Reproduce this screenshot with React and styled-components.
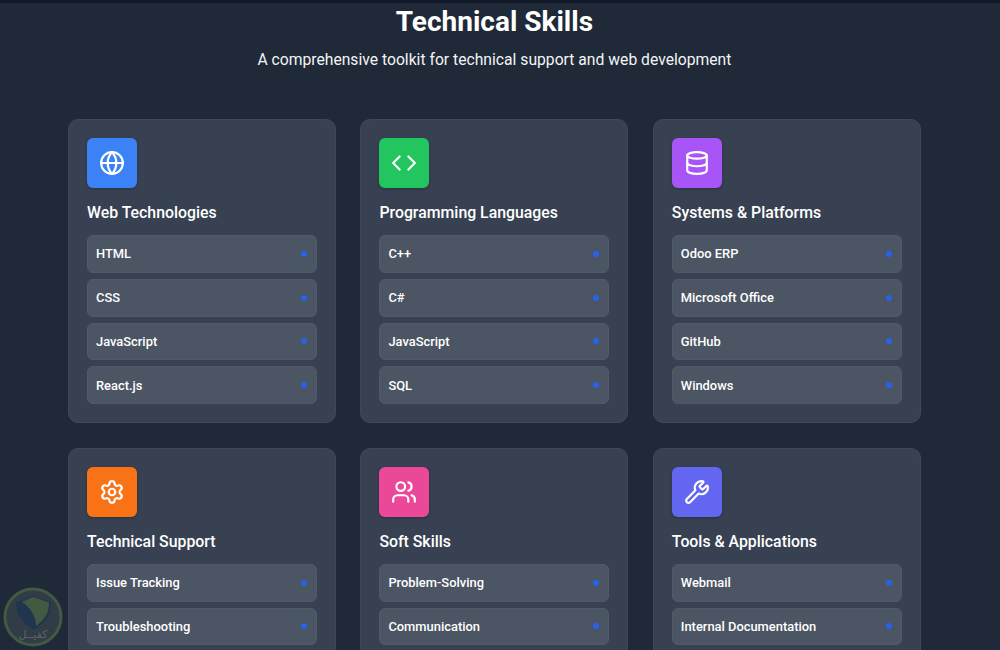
import React from "react";
import styled, { createGlobalStyle } from "styled-components";
import { Globe, Code, Database, Settings, Users, Wrench } from "lucide-react";

const GlobalStyle = createGlobalStyle`
  html, body {
    margin: 0;
    padding: 0;
    height: 100%;
    overflow: hidden;
    background: #1f2937;
  }
  * {
    box-sizing: border-box;
  }
`;

const Page = styled.div`
  height: 650px;
  overflow: hidden;
  position: relative;
  background: #1f2937;
  border-top: 3px solid #111827;
  padding: 1px 79.2px 0 68px;
  font-family: Roboto, "Noto Sans", sans-serif;
  color: #fff;
`;

const Title = styled.h2`
  margin: 0;
  font-size: 28px;
  line-height: 36px;
  font-weight: 700;
  text-align: center;
`;

const Subtitle = styled.p`
  margin: 8px 0 0;
  font-size: 15.7px;
  line-height: 24px;
  text-align: center;
  color: #f3f4f6;
`;

const Grid = styled.div`
  display: grid;
  grid-template-columns: repeat(3, 1fr);
  gap: 25px 24.4px;
  margin-top: 47px;
`;

const Card = styled.section`
  background: #374151;
  border: 1px solid #3e4858;
  border-radius: 10px;
  padding: 18px 18px 17.75px;
`;

const IconBox = styled.div`
  width: 50px;
  height: 50px;
  border-radius: 6px;
  display: flex;
  align-items: center;
  justify-content: center;
  background: ${(p) => p.$color};
  box-shadow: 0 1px 3px rgba(0, 0, 0, 0.25);
  color: #fff;
`;

const CardTitle = styled.h3`
  margin: 14px 0 11px;
  font-size: 15.85px;
  line-height: 22px;
  font-weight: 500;
`;

const List = styled.ul`
  list-style: none;
  margin: 0;
  padding: 0;
  display: flex;
  flex-direction: column;
  gap: 6px;
`;

const Item = styled.li`
  height: 37.75px;
  padding: 0 9px 0 8px;
  display: flex;
  align-items: center;
  justify-content: space-between;
  background: #4b5563;
  border: 1px solid #505a68;
  border-radius: 6px;
  font-size: 12.9px;
  font-weight: 500;
`;

const Dot = styled.span`
  width: 6px;
  height: 6px;
  border-radius: 50%;
  background: #2563eb;
`;

const Badge = styled.div`
  position: absolute;
  left: 3px;
  top: 584px;
  width: 60px;
  height: 60px;
  opacity: 0.6;
`;

const BadgeText = styled.span`
  position: absolute;
  left: 0;
  right: 0;
  top: 42px;
  text-align: center;
  font-family: "DejaVu Sans", sans-serif;
  font-size: 11px;
  line-height: 12px;
  color: #7f8a80;
`;

const skills = [
  { title: "Web Technologies", color: "#3b82f6", icon: Globe, items: ["HTML", "CSS", "JavaScript", "React.js"] },
  { title: "Programming Languages", color: "#22c55e", icon: Code, items: ["C++", "C#", "JavaScript", "SQL"] },
  { title: "Systems & Platforms", color: "#a855f7", icon: Database, items: ["Odoo ERP", "Microsoft Office", "GitHub", "Windows"] },
  { title: "Technical Support", color: "#f97316", icon: Settings, items: ["Issue Tracking", "Troubleshooting"] },
  { title: "Soft Skills", color: "#ec4899", icon: Users, items: ["Problem-Solving", "Communication"] },
  { title: "Tools & Applications", color: "#6366f1", icon: Wrench, items: ["Webmail", "Internal Documentation"] },
];

const App = () => (
  <Page>
    <GlobalStyle />
    <Title>Technical Skills</Title>
    <Subtitle>A comprehensive toolkit for technical support and web development</Subtitle>
    <Grid>
      {skills.map((s) => {
        const Icon = s.icon;
        return (
          <Card key={s.title}>
            <IconBox $color={s.color}>
              <Icon size={26} strokeWidth={2} />
            </IconBox>
            <CardTitle>{s.title}</CardTitle>
            <List>
              {s.items.map((item) => (
                <Item key={item}>
                  {item}
                  <Dot />
                </Item>
              ))}
            </List>
          </Card>
        );
      })}
    </Grid>
    <Badge>
      <svg width="60" height="60" viewBox="0 0 60 60">
        <circle cx="30" cy="30" r="28" fill="#3f4a52" stroke="#5c7a4a" strokeWidth="3" />
        <path d="M30 9 L48 15 C48 28 43 36 31 43 C19 36 13 28 13 15 Z" fill="#1f3f5e" />
        <path d="M30 10 L46 15.5 C46 27 41 33 33 39 C33 29 27 20 19 15 Z" fill="#5c7a4a" />
      </svg>
      <BadgeText>كفيــل</BadgeText>
    </Badge>
  </Page>
);

export default App;
